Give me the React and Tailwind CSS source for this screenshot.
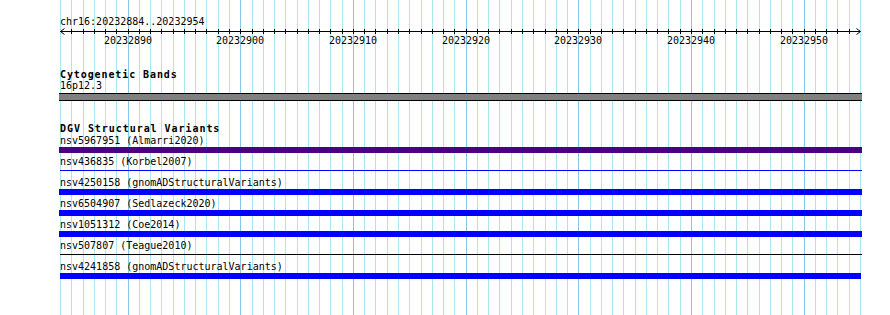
import React from "react";

const XS = Array.from({ length: 72 }, (_, k) => Math.round(60 + (k * 800) / 71));

const ROWS = [
  { label: "nsv5967951 (Almarri2020)", kind: "purple" },
  { label: "nsv436835 (Korbel2007)", kind: "blueline" },
  { label: "nsv4250158 (gnomADStructuralVariants)", kind: "blue" },
  { label: "nsv6504907 (Sedlazeck2020)", kind: "blue" },
  { label: "nsv1051312 (Coe2014)", kind: "blue" },
  { label: "nsv507807 (Teague2010)", kind: "blackline" },
  { label: "nsv4241858 (gnomADStructuralVariants)", kind: "blueshort" },
];

function Grid() {
  return (
    <svg className="absolute inset-0" width="890" height="315" shapeRendering="crispEdges">
      {XS.map((x, k) => (
        <line
          key={k}
          x1={x + 0.5}
          x2={x + 0.5}
          y1="0"
          y2="315"
          stroke={k % 10 === 6 ? "#84c9ec" : "#a9e7ef"}
          strokeWidth="1"
        />
      ))}
    </svg>
  );
}

function Ruler() {
  const labels = [];
  for (let k = 6; k <= 66; k += 10) labels.push(k);
  return (
    <svg width="802" height="22" className="block overflow-visible">
      <g shapeRendering="crispEdges" stroke="#000" strokeWidth="1">
        <line x1="0" x2="800" y1="4.5" y2="4.5" />
        {XS.slice(1, 71).map((x, i) => (
          <line key={i} x1={x - 60 + 0.5} x2={x - 60 + 0.5} y1="2" y2="7" />
        ))}
      </g>
      <polyline points="4.5,1.5 0.5,4.5 4.5,7.5" fill="none" stroke="#000" strokeWidth="1" />
      <polyline points="796.5,1.5 800.5,4.5 796.5,7.5" fill="none" stroke="#000" strokeWidth="1" />
      {labels.map((k) => (
        <text
          key={k}
          x={XS[k] - 60}
          y="17"
          textAnchor="middle"
          fontFamily="'DejaVu Sans Mono', monospace"
          fontSize="10"
          fill="#000"
        >
          {20232884 + k}
        </text>
      ))}
    </svg>
  );
}

function Bar({ kind }) {
  if (kind === "purple") return <div className="ml-[-1px] mt-[1px] h-[6px] w-[803px] bg-[#4b0082]" />;
  if (kind === "blue") return <div className="ml-[-1px] mt-[1px] h-[6px] w-[803px] bg-[#0000ff]" />;
  if (kind === "blueshort") return <div className="mt-[1px] h-[6px] w-[801px] bg-[#0000ff]" />;
  if (kind === "blueline")
    return (
      <div className="mt-[1px] h-[6px] w-[802px] pt-[2px]">
        <div className="h-[1px] w-full bg-[#0000ff]" />
      </div>
    );
  return (
    <div className="mt-[1px] h-[6px] w-[802px] pt-[2px]">
      <div className="h-[1px] w-full bg-black" />
    </div>
  );
}

export default function App() {
  return (
    <div className="relative h-[315px] w-[890px] overflow-hidden bg-white font-['DejaVu_Sans_Mono',monospace] text-black">
      <Grid />
      <div className="relative pl-[60px] pt-[16px]">
        <div className="h-[11px] whitespace-nowrap text-[10px] leading-[11px]">chr16:20232884..20232954</div>
        <Ruler />
        <div className="mt-[20px] h-[11px] whitespace-nowrap text-[10px] font-bold leading-[11px] tracking-[0.9px]">
          Cytogenetic Bands
        </div>
        <div className="h-[11px] whitespace-nowrap text-[10px] leading-[11px]">16p12.3</div>
        <div className="ml-[-1px] mt-[2px] h-[8px] w-[803px] border-y border-black bg-[#808080]" />
        <div className="mt-[22px] h-[11px] whitespace-nowrap text-[10px] font-bold leading-[11px] tracking-[0.95px]">
          DGV Structural Variants
        </div>
        <div className="mt-[1px] flex flex-col">
          {ROWS.map((r, i) => (
            <div key={i} className="h-[21px]">
              <div className="h-[11px] whitespace-nowrap text-[10px] leading-[11px]">{r.label}</div>
              <Bar kind={r.kind} />
            </div>
          ))}
        </div>
      </div>
    </div>
  );
}
